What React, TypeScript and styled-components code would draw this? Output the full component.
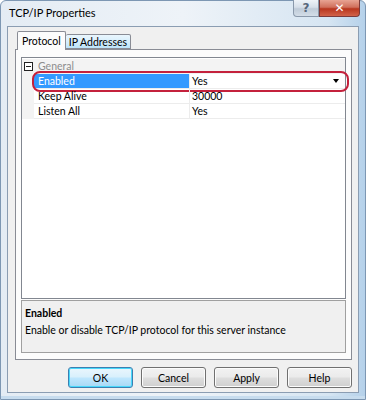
import * as React from "react";
import styled, { createGlobalStyle } from "styled-components";

const GlobalStyle = createGlobalStyle`
  html, body {
    margin: 0;
    padding: 0;
    background: #ffffff;
  }
  body {
    font-family: Lato, "Noto Sans", "DejaVu Sans", sans-serif;
    font-size: 10.5px;
    color: #000;
  }
`;

const Window = styled.div`
  width: 366px;
  height: 400px;
  box-sizing: border-box;
  display: flex;
  flex-direction: column;
  border: 1px solid #7d97b3;
  border-radius: 6px 6px 0 0;
  background: linear-gradient(90deg, #e4ecf4 0%, #eef3f8 50%, #d6e5f2 90%, #b5d1ea 100%);
  box-shadow: inset 0 -3px 0 #c7dcee;
`;

const TitleBar = styled.div`
  height: 25px;
  display: flex;
  align-items: flex-start;
  justify-content: space-between;
  padding-left: 8px;
  padding-right: 5px;
`;

const Title = styled.span`
  margin-top: 5px;
  font-size: 11px;
  color: #000;
`;

const Captions = styled.div`
  display: flex;
  margin-top: -1px;
`;

const CaptionButton = styled.div<{ $close?: boolean }>`
  height: 16px;
  width: ${p => (p.$close ? "39px" : "24px")};
  display: flex;
  align-items: center;
  justify-content: center;
  border: 1px solid ${p => (p.$close ? "#7b3a3a" : "#8a99ab")};
  border-top: none;
  border-radius: ${p => (p.$close ? "0 0 4px 0" : "0 0 0 4px")};
  background: ${p =>
    p.$close
      ? "linear-gradient(#e8a493 0%, #d0705c 45%, #b8361e 55%, #d2634a 100%)"
      : "linear-gradient(#eef3f8 0%, #d6dfe9 45%, #bfcbd8 55%, #d3dde8 100%)"};
  color: ${p => (p.$close ? "#fff" : "#56667a")};
  font-size: 12px;
  font-weight: bold;
  font-family: "DejaVu Sans", sans-serif;
`;

const Client = styled.div`
  flex: 1;
  margin: 0 6px 6px 6px;
  border: 1px solid #8b9db2;
  background: #f0f0f0;
  display: flex;
  flex-direction: column;
  padding: 4px 6px 0 7px;
`;

const TabStrip = styled.div`
  display: flex;
  align-items: flex-end;
  height: 18px;
  padding-left: 2px;
  position: relative;
  z-index: 1;
`;

const Tab = styled.div<{ $active?: boolean }>`
  height: ${p => (p.$active ? "19px" : "15px")};
  box-sizing: border-box;
  padding: ${p => (p.$active ? "0 4px" : "0 3px")};
  display: flex;
  align-items: center;
  border: 1px solid #898c95;
  border-bottom: ${p => (p.$active ? "none" : "1px solid #898c95")};
  border-left: ${p => (p.$active ? "1px solid #898c95" : "none")};
  border-radius: 2px 2px 0 0;
  background: ${p => (p.$active ? "#fcfcfc" : "linear-gradient(#eaf6fd, #d7effc 50%, #bce4fa)")};
  margin-bottom: ${p => (p.$active ? "-1px" : "0")};
`;

const TabPanel = styled.div`
  height: 311px;
  box-sizing: border-box;
  border: 1px solid #898c95;
  background: #fcfcfc;
  padding: 7px 5px 6px 5px;
  display: flex;
  flex-direction: column;
  gap: 1px;
`;

const Grid = styled.div`
  height: 243px;
  box-sizing: border-box;
  border: 1px solid #828790;
  background: #fff;
  padding-top: 1px;
`;

const Row = styled.div`
  height: 15px;
  display: grid;
  grid-template-columns: 12px 156px 1fr;
  position: relative;
`;

const Gutter = styled.div`
  background: #f3f3f3;
  display: flex;
  align-items: center;
  justify-content: center;
`;

const Expander = styled.div`
  width: 7px;
  height: 7px;
  border: 1px solid #222;
  position: relative;
  background: #fff;
  &::after {
    content: "";
    position: absolute;
    left: 1px;
    right: 1px;
    top: 3px;
    height: 1px;
    background: #222;
  }
`;

const CategoryLabel = styled.div`
  grid-column: 2 / 4;
  background: #f3f3f3;
  color: #8d8d8d;
  padding-left: 4px;
  line-height: 14px;
`;

const NameCell = styled.div<{ $selected?: boolean }>`
  padding-left: 4px;
  line-height: 14px;
  border-bottom: 1px solid #ececec;
  border-right: 1px solid #ececec;
  background: ${p => (p.$selected ? "#3399ff" : "transparent")};
  color: ${p => (p.$selected ? "#fff" : "#000")};
`;

const ValueCell = styled.div`
  padding-left: 2px;
  line-height: 14px;
  border-bottom: 1px solid #ececec;
  display: flex;
  justify-content: space-between;
  align-items: center;
`;

const DropArrow = styled.div`
  width: 0;
  height: 0;
  margin-right: 6px;
  border-left: 3.5px solid transparent;
  border-right: 3.5px solid transparent;
  border-top: 4px solid #000;
`;

const Highlight = styled.div`
  position: absolute;
  left: 10px;
  top: -3px;
  right: -4px;
  bottom: -3px;
  border: 2px solid #c4213c;
  border-radius: 8px;
  pointer-events: none;
`;

const Description = styled.div`
  height: 53px;
  box-sizing: border-box;
  border: 1px solid #a0a0a0;
  background: #f0f0f0;
  padding: 5px 3px;
  display: flex;
  flex-direction: column;
  gap: 3px;
  line-height: 14px;
`;

const DescTitle = styled.div`
  font-weight: bold;
`;

const ButtonRow = styled.div`
  display: flex;
  justify-content: flex-end;
  gap: 8px;
  padding-top: 7px;
`;

const Button = styled.button<{ $default?: boolean }>`
  width: 65px;
  height: 21px;
  box-sizing: border-box;
  font-family: inherit;
  font-size: 10.5px;
  color: #000;
  border-radius: 3px;
  border: 1px solid ${p => (p.$default ? "#3c7fb1" : "#707070")};
  background: ${p =>
    p.$default
      ? "linear-gradient(#eaf6fd 0%, #d9f0fc 45%, #bee6fd 55%, #a7d9f5 100%)"
      : "linear-gradient(#f2f2f2 0%, #ebebeb 45%, #dddddd 55%, #cfcfcf 100%)"};
  box-shadow: inset 0 0 0 1px ${p => (p.$default ? "#48d8fb" : "#fcfcfc")};
  padding: 0;
`;

type Prop = { name: string; value: string; selected?: boolean; dropdown?: boolean };

const props: Prop[] = [
  { name: "Enabled", value: "Yes", selected: true, dropdown: true },
  { name: "Keep Alive", value: "30000" },
  { name: "Listen All", value: "Yes" },
];

export default function App() {
  return (
    <>
      <GlobalStyle />
      <Window>
        <TitleBar>
          <Title>TCP/IP Properties</Title>
          <Captions>
            <CaptionButton>?</CaptionButton>
            <CaptionButton $close>✕</CaptionButton>
          </Captions>
        </TitleBar>
        <Client>
          <TabStrip>
            <Tab $active>Protocol</Tab>
            <Tab>IP Addresses</Tab>
          </TabStrip>
          <TabPanel>
            <Grid>
              <Row>
                <Gutter>
                  <Expander />
                </Gutter>
                <CategoryLabel>General</CategoryLabel>
              </Row>
              {props.map(p => (
                <Row key={p.name}>
                  <Gutter />
                  <NameCell $selected={p.selected}>{p.name}</NameCell>
                  <ValueCell>
                    <span>{p.value}</span>
                    {p.dropdown && <DropArrow />}
                  </ValueCell>
                  {p.selected && <Highlight />}
                </Row>
              ))}
            </Grid>
            <Description>
              <DescTitle>Enabled</DescTitle>
              <div>Enable or disable TCP/IP protocol for this server instance</div>
            </Description>
          </TabPanel>
          <ButtonRow>
            <Button $default>OK</Button>
            <Button>Cancel</Button>
            <Button>Apply</Button>
            <Button>Help</Button>
          </ButtonRow>
        </Client>
      </Window>
    </>
  );
}
